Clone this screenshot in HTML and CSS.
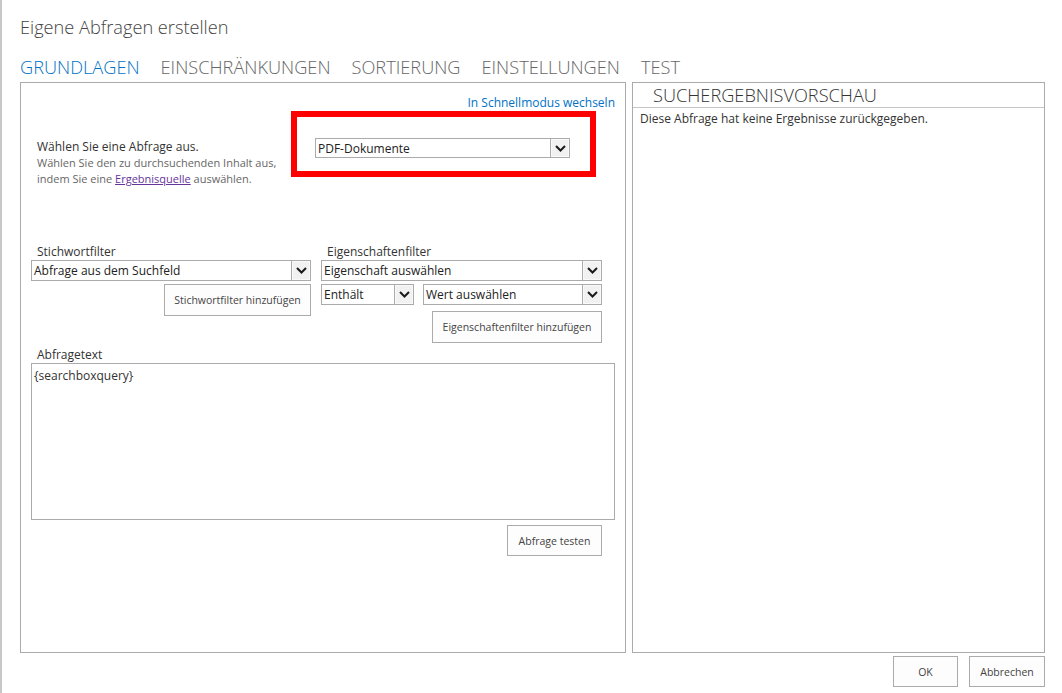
FILE: index.html
```html
<!DOCTYPE html>
<html lang="de">
<head>
<meta charset="utf-8">
<title>Eigene Abfragen erstellen</title>
<link rel="stylesheet" href="styles.css">
</head>
<body>
<div class="dialog">
  <h1 class="title">Eigene Abfragen erstellen</h1>
  <nav class="tabs">
    <span class="tab active">GRUNDLAGEN</span>
    <span class="tab">EINSCHRÄNKUNGEN</span>
    <span class="tab">SORTIERUNG</span>
    <span class="tab">EINSTELLUNGEN</span>
    <span class="tab">TEST</span>
  </nav>
  <div class="main">
    <section class="panel left">
      <div class="quick"><a class="link" href="#">In Schnellmodus wechseln</a></div>
      <div class="query-row">
        <div class="query-desc">
          <div class="label-main">Wählen Sie eine Abfrage aus.</div>
          <div class="desc">Wählen Sie den zu durchsuchenden Inhalt aus,</div>
          <div class="desc">indem Sie eine <a class="visited" href="#">Ergebnisquelle</a> auswählen.</div>
        </div>
        <div class="highlight">
          <div class="select w-query"><span class="sel-text">PDF-Dokumente</span><span class="arrow"><svg width="11" height="7" viewBox="0 0 11 7"><path d="M1 1l4.5 4.5L10 1" fill="none" stroke="#1a1a1a" stroke-width="2"/></svg></span></div>
        </div>
      </div>
      <div class="filters">
        <div class="fcol kw">
          <div class="flabel">Stichwortfilter</div>
          <div class="select"><span class="sel-text">Abfrage aus dem Suchfeld</span><span class="arrow"><svg width="11" height="7" viewBox="0 0 11 7"><path d="M1 1l4.5 4.5L10 1" fill="none" stroke="#1a1a1a" stroke-width="2"/></svg></span></div>
          <div class="btn-row"><button class="btn b-kw">Stichwortfilter hinzufügen</button></div>
        </div>
        <div class="fcol prop">
          <div class="flabel">Eigenschaftenfilter</div>
          <div class="select"><span class="sel-text">Eigenschaft auswählen</span><span class="arrow"><svg width="11" height="7" viewBox="0 0 11 7"><path d="M1 1l4.5 4.5L10 1" fill="none" stroke="#1a1a1a" stroke-width="2"/></svg></span></div>
          <div class="sel-pair">
            <div class="select w-op"><span class="sel-text">Enthält</span><span class="arrow"><svg width="11" height="7" viewBox="0 0 11 7"><path d="M1 1l4.5 4.5L10 1" fill="none" stroke="#1a1a1a" stroke-width="2"/></svg></span></div>
            <div class="select w-val"><span class="sel-text">Wert auswählen</span><span class="arrow"><svg width="11" height="7" viewBox="0 0 11 7"><path d="M1 1l4.5 4.5L10 1" fill="none" stroke="#1a1a1a" stroke-width="2"/></svg></span></div>
          </div>
          <div class="btn-row"><button class="btn b-prop">Eigenschaftenfilter hinzufügen</button></div>
        </div>
      </div>
      <div class="qtext">
        <div class="flabel">Abfragetext</div>
        <div class="textarea">{searchboxquery}</div>
        <div class="btn-row test-row"><button class="btn b-test">Abfrage testen</button></div>
      </div>
    </section>
    <section class="panel right">
      <h2 class="preview-head">SUCHERGEBNISVORSCHAU</h2>
      <p class="preview-msg">Diese Abfrage hat keine Ergebnisse zurückgegeben.</p>
    </section>
  </div>
  <div class="footer">
    <button class="btn b-ok">OK</button>
    <button class="btn b-cancel">Abbrechen</button>
  </div>
</div>
</body>
</html>
```
FILE: styles.css
```css
* { box-sizing: border-box; }
html, body { margin: 0; padding: 0; background: #fff; }
body {
  font-family: "Segoe UI", "Open Sans", "Noto Sans", sans-serif;
  color: #333;
}
.dialog {
  width: 1062px;
  height: 693px;
  border-left: 2px solid #c8c8c8;
  padding: 0 17px 0 18px;
  display: flex;
  flex-direction: column;
}
.title {
  margin: 0;
  padding-top: 15px;
  height: 55px;
  font-weight: 300;
  font-size: 18.2px;
  line-height: 24px;
  color: #444;
}
.tabs {
  display: flex;
  gap: 21px;
  height: 27px;
  font-size: 18.2px;
  font-weight: 300;
  line-height: 24px;
}
.tab { color: #666; }
.tab.active { color: #0072c6; }
.main {
  display: flex;
  gap: 6px;
  height: 571px;
}
.panel {
  border: 1px solid #ababab;
  height: 571px;
}
.left { width: 606px; display: flex; flex-direction: column; }
.right { flex: 1; }
.quick {
  display: flex;
  justify-content: flex-end;
  padding: 11px 10px 0 0;
  font-size: 12px;
  line-height: 17px;
  height: 28px;
}
.link { color: #0072c6; text-decoration: none; }
.query-row { display: flex; align-items: flex-start; height: 66px; }
.query-desc {
  width: 270px;
  padding: 28px 0 0 16px;
}
.label-main { font-size: 12px; line-height: 16px; color: #333; }
.desc { font-size: 11px; line-height: 16px; color: #666; white-space: nowrap; }
.visited { color: #663399; text-decoration: underline; }
.highlight {
  width: 305px;
  height: 66px;
  border: 6px solid #ff0000;
  padding: 21px 0 0 18px;
}
.select {
  display: flex;
  align-items: center;
  height: 21px;
  border: 1px solid #ababab;
  background: #fff;
  font-size: 12px;
  color: #222;
}
.sel-text { flex: 1; padding-left: 2px; line-height: 19px; white-space: nowrap; overflow: hidden; }
.arrow {
  width: 19px;
  height: 19px;
  border-left: 1px solid #ababab;
  background: #f1f1f1;
  display: flex;
  align-items: center;
  justify-content: center;
  box-shadow: inset 0 0 0 1px #fafafa;
}
.w-query { width: 255px; height: 20px; }
.w-query .arrow { height: 18px; }
.filters {
  display: flex;
  gap: 10px;
  padding: 66px 0 0 10px;
}
.fcol.kw { width: 280px; }
.fcol.prop { width: 281px; }
.flabel { font-size: 12px; line-height: 17px; padding-left: 6px; color: #333; }
.btn-row { display: flex; justify-content: flex-end; }
.btn {
  font-family: inherit;
  font-size: 10.5px;
  color: #444;
  background: #fdfdfd;
  border: 1px solid #ababab;
  padding: 0;
  margin: 0;
}
.b-kw { width: 147px; height: 32px; margin-top: 3px; }
.sel-pair { display: flex; gap: 9px; margin-top: 3px; }
.w-op { width: 93px; }
.w-val { width: 179px; }
.b-prop { width: 170px; height: 32px; margin-top: 6px; }
.qtext { padding: 3px 10px 0 10px; }
.textarea {
  height: 157px;
  border: 1px solid #ababab;
  padding: 3px 2px;
  font-size: 12px;
  line-height: 17px;
  color: #333;
}
.test-row { padding-right: 13px; }
.b-test { width: 95px; height: 31px; margin-top: 5px; }
.preview-head {
  margin: 0;
  height: 25px;
  border-bottom: 1px solid #c6c6c6;
  padding-left: 20px;
  font-size: 18.2px;
  font-weight: 300;
  line-height: 24px;
  color: #333;
}
.preview-msg {
  margin: 0;
  padding: 2px 0 0 7px;
  font-size: 12px;
  line-height: 17px;
  color: #333;
}
.footer {
  display: flex;
  justify-content: flex-end;
  gap: 11px;
  padding-top: 3px;
}
.b-ok { width: 65px; height: 31px; }
.b-cancel { width: 76px; height: 31px; }
```
